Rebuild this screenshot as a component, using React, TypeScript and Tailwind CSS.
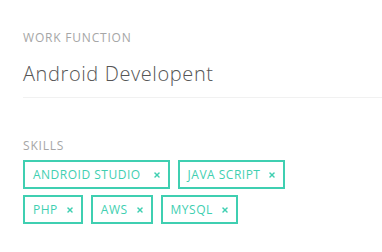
import { X } from 'lucide-react';

const SKILLS = ['ANDROID STUDIO', 'JAVA SCRIPT', 'PHP', 'AWS', 'MYSQL'];

function SkillChip({ label, wide }: { label: string; wide?: boolean }) {
  return (
    <span className="inline-flex items-center h-[29px] pl-[8px] pr-[7px] border-2 border-[#3fcfb1] text-[#3fcfb1] text-[12px] font-medium tracking-[0.5px]">
      {label}
      <X className={wide ? 'ml-[12px] w-[8px] h-[8px]' : 'ml-[8px] w-[8px] h-[8px]'} strokeWidth={4.5} />
    </span>
  );
}

export default function App() {
  return (
    <div className="w-[382px] h-[252px] bg-white pl-[23px] pt-[32px] font-['Open_Sans',sans-serif] overflow-hidden">
      <div className="text-[12px] leading-[12px] text-[#a6a6a6] tracking-[0.8px]">WORK FUNCTION</div>
      <div className="mt-[19px] text-[20px] leading-[22px] font-light text-[#555] tracking-[0.6px]">Android Developent</div>
      <div className="mt-[12px] h-px bg-[#f1f1f1]" />
      <div className="mt-[42px] text-[12px] leading-[12px] text-[#a6a6a6] tracking-[0.8px]">SKILLS</div>
      <div className="mt-[8px] flex flex-wrap gap-x-[8px] gap-y-[6px] w-[300px]">
        {SKILLS.map((s, i) => (
          <SkillChip key={s} label={s} wide={i === 0} />
        ))}
      </div>
    </div>
  );
}
